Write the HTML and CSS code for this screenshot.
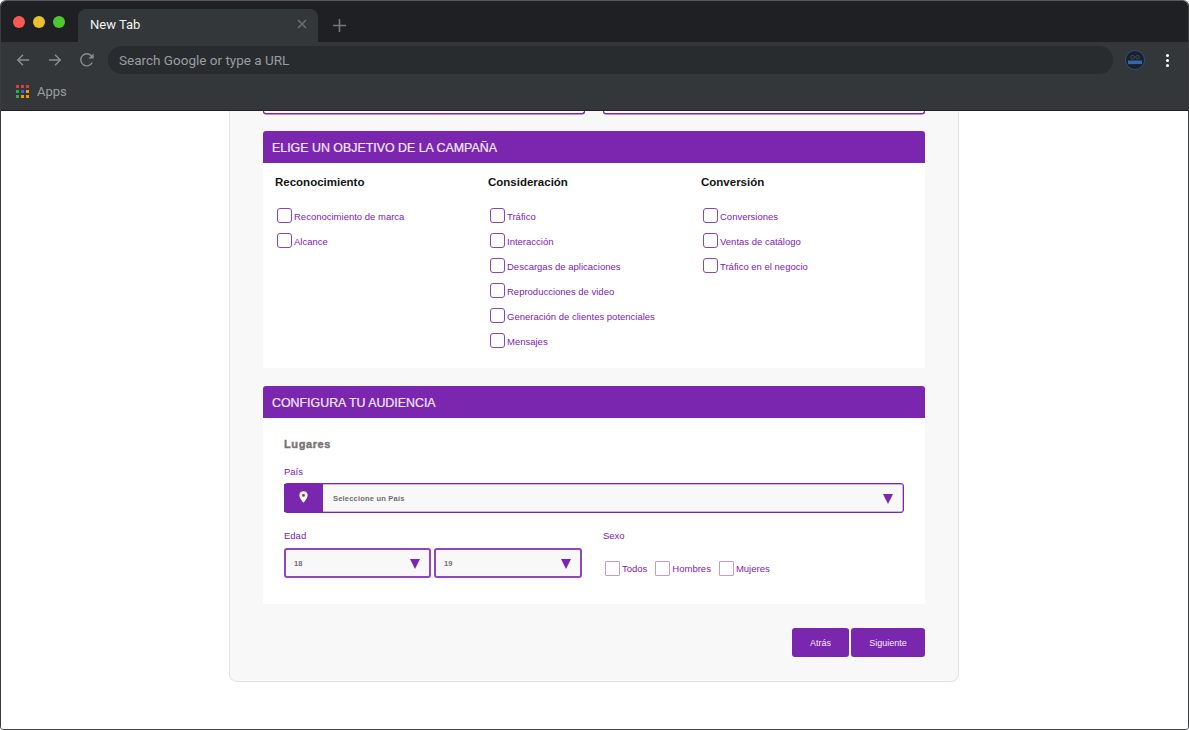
FILE: index.html
```html
<!DOCTYPE html>
<html lang="en">
<head>
    <meta charset="UTF-8">
    <meta name="viewport" content="width=device-width, initial-scale=1.0">
    <title>New Tab</title>
    <link rel="stylesheet" href="styles.css">
</head>
<body>
    <div class="window">
        <div class="tabstrip">
            <div class="lights">
                <span class="light red"></span>
                <span class="light yellow"></span>
                <span class="light green"></span>
            </div>
            <div class="tab">
                <span class="tab-title">New Tab</span>
                <svg class="tab-close" width="10" height="10" viewBox="0 0 10 10"><path d="M1 1l8 8M9 1l-8 8" stroke="#6e7175" stroke-width="1.4" fill="none"/></svg>
            </div>
            <svg class="new-tab" width="13" height="13" viewBox="0 0 13 13"><path d="M6.5 0v13M0 6.5h13" stroke="#75787c" stroke-width="1.6" fill="none"/></svg>
        </div>

        <div class="toolbar">
            <svg class="nav-icon" width="14" height="14" viewBox="0 0 16 16"><path d="M15 8H2M8 2L2 8l6 6" stroke="#8a8d91" stroke-width="1.6" fill="none"/></svg>
            <svg class="nav-icon" width="14" height="14" viewBox="0 0 16 16"><path d="M1 8h13M8 2l6 6-6 6" stroke="#8a8d91" stroke-width="1.6" fill="none"/></svg>
            <svg class="nav-icon" width="14" height="14" viewBox="1 1 14 14"><path d="M13.2 10.500A6 6 0 1 1 12.300 3.800L14 5.600" stroke="#8a8d91" stroke-width="1.4" fill="none"/><path d="M14.600 1.400v5.200H9.400z" fill="#8a8d91"/></svg>
            <div class="omnibox">Search Google or type a URL</div>
            <svg class="avatar" width="20" height="20" viewBox="0 0 20 20">
                <circle cx="10" cy="10" r="9.5" fill="#1b2029" stroke="#2c5a9e" stroke-width="0.8"/>
                <circle cx="7.5" cy="7.2" r="1.800" fill="none" stroke="#3c5f92" stroke-width="0.7"/>
                <circle cx="12.5" cy="7.2" r="1.800" fill="none" stroke="#3c5f92" stroke-width="0.7"/>
                <rect x="3" y="10.500" width="14" height="3.600" fill="#3566ad"/>
            </svg>
            <div class="menu-dots"><span></span><span></span><span></span></div>
        </div>

        <div class="bookmarks">
            <div class="apps-grid">
                <span class="c-red"></span><span class="c-red"></span><span class="c-red"></span>
                <span class="c-green"></span><span class="c-blue"></span><span class="c-orange"></span>
                <span class="c-green"></span><span class="c-orange"></span><span class="c-orange"></span>
            </div>
            <span class="apps-label">Apps</span>
        </div>

        <div class="page">
            <div class="panel">
                <div class="cut-inputs">
                    <div class="cut-input"></div>
                    <div class="cut-input"></div>
                </div>

                <section class="card card-goal">
                    <h2 class="card-title">ELIGE UN OBJETIVO DE LA CAMPAÑA</h2>
                    <div class="goal-columns">
                        <div class="goal-col">
                            <h3 class="goal-title">Reconocimiento</h3>
                            <label class="check"><span class="box"></span>Reconocimiento de marca</label>
                            <label class="check"><span class="box"></span>Alcance</label>
                        </div>
                        <div class="goal-col">
                            <h3 class="goal-title">Consideración</h3>
                            <label class="check"><span class="box"></span>Tráfico</label>
                            <label class="check"><span class="box"></span>Interacción</label>
                            <label class="check"><span class="box"></span>Descargas de aplicaciones</label>
                            <label class="check"><span class="box"></span>Reproducciones de video</label>
                            <label class="check"><span class="box"></span>Generación de clientes potenciales</label>
                            <label class="check"><span class="box"></span>Mensajes</label>
                        </div>
                        <div class="goal-col">
                            <h3 class="goal-title">Conversión</h3>
                            <label class="check"><span class="box"></span>Conversiones</label>
                            <label class="check"><span class="box"></span>Ventas de catálogo</label>
                            <label class="check"><span class="box"></span>Tráfico en el negocio</label>
                        </div>
                    </div>
                </section>

                <section class="card card-audience">
                    <h2 class="card-title">CONFIGURA TU AUDIENCIA</h2>
                    <div class="audience-body">
                        <h3 class="places-title">Lugares</h3>
                        <div class="field-label">País</div>
                        <div class="select select-country">
                            <span class="select-icon">
                                <svg width="9" height="12" viewBox="0 0 10 13"><path fill-rule="evenodd" d="M5 0a4.600 4.600 0 0 1 4.600 4.600C9.600 7.800 5 13 5 13S.4 7.800.4 4.600A4.600 4.600 0 0 1 5 0zm0 3.100a1.600 1.600 0 1 0 0 3.200 1.600 1.600 0 0 0 0-3.200z" fill="#fff"/></svg>
                            </span>
                            <span class="select-text">Seleccione un País</span>
                            <span class="arrow"></span>
                        </div>
                        <div class="audience-row">
                            <div class="age">
                                <div class="field-label">Edad</div>
                                <div class="age-selects">
                                    <div class="select select-age"><span class="select-text">18</span><span class="arrow"></span></div>
                                    <div class="select select-age"><span class="select-text">19</span><span class="arrow"></span></div>
                                </div>
                            </div>
                            <div class="sex">
                                <div class="field-label">Sexo</div>
                                <div class="sex-options">
                                    <label class="check-small"><span class="box box-light"></span>Todos</label>
                                    <label class="check-small"><span class="box box-light"></span>Hombres</label>
                                    <label class="check-small"><span class="box box-light"></span>Mujeres</label>
                                </div>
                            </div>
                        </div>
                    </div>
                </section>

                <div class="actions">
                    <button class="btn btn-back">Atrás</button>
                    <button class="btn btn-next">Siguiente</button>
                </div>
            </div>
        </div>
    </div>
</body>
</html>
```

FILE: styles.css
```css
* {
    box-sizing: border-box;
}

html, body {
    margin: 0;
    height: 100%;
    background: #fff;
    overflow: hidden;
}

body {
    font-family: "Liberation Sans", Arial, sans-serif;
}

.window {
    height: 730px;
    display: flex;
    flex-direction: column;
    border: 1px solid #3b3c3e;
    border-top-color: #5a5b5d;
    border-bottom-color: #4a4a4a;
    border-radius: 6px 6px 4px 4px;
    overflow: hidden;
}

/* browser chrome */
.tabstrip {
    height: 41px;
    flex: none;
    display: flex;
    align-items: flex-end;
    background: #1f2023;
}

.lights {
    display: flex;
    gap: 8px;
    padding: 0 0 14px 12px;
    width: 77px;
}

.light {
    width: 12px;
    height: 12px;
    border-radius: 50%;
}

.light.red { background: #fc5753; }
.light.yellow { background: #e9c02c; }
.light.green { background: #4ec62f; }

.tab {
    width: 240px;
    height: 33px;
    display: flex;
    align-items: center;
    justify-content: space-between;
    padding: 0 11px 3px 12px;
    background: #33373a;
    border-radius: 8px 8px 0 0;
}

.tab-title {
    color: #f1f3f4;
    font-family: Roboto, sans-serif;
    font-size: 13px;
}

.new-tab {
    margin: 0 0 10px 15px;
}

.toolbar {
    height: 36px;
    flex: none;
    display: flex;
    align-items: center;
    background: #33373a;
    padding: 0 0 0 15px;
}

.nav-icon {
    margin-right: 18px;
}

.nav-icon:nth-child(3) {
    margin-right: 14px;
}

.omnibox {
    width: 1005px;
    height: 28px;
    padding-left: 11px;
    border-radius: 14px;
    background: #292c2e;
    color: #9a9da1;
    font-family: Roboto, sans-serif;
    font-size: 13.500px;
    line-height: 29px;
}

.avatar {
    margin-left: 12px;
}

.menu-dots {
    margin-left: 21px;
    display: flex;
    flex-direction: column;
    gap: 2px;
}

.menu-dots span {
    width: 3px;
    height: 3px;
    border-radius: 50%;
    background: #fff;
}

.bookmarks {
    height: 33px;
    flex: none;
    display: flex;
    align-items: center;
    padding: 0 0 6px 15px;
    background: #33373a;
    border-bottom: 1px solid #202124;
}

.apps-grid {
    display: grid;
    grid-template-columns: repeat(3, 3px);
    grid-auto-rows: 3px;
    gap: 2px;
}

.c-red { background: #e53935; }
.c-green { background: #34a853; }
.c-blue { background: #1a73e8; }
.c-orange { background: #f29900; }

.apps-label {
    margin-left: 8px;
    color: #9a9da1;
    font-family: Roboto, sans-serif;
    font-size: 13px;
}

/* page */
.page {
    flex: 1;
    min-height: 0;
    background: #fff;
}

.panel {
    width: 730px;
    margin-left: 228px;
    height: 571px;
    padding: 0 33px;
    background: #f8f8f8;
    border: 1px solid #e4e4e4;
    border-top: none;
    border-radius: 0 0 8px 8px;
}

.cut-inputs {
    display: flex;
    justify-content: space-between;
}

.cut-input {
    width: 322px;
    height: 3px;
    background: #f8f8f8;
    border: 1px solid #7b26ae;
    border-top: none;
    box-shadow: 0 0.5px 0 #7b26ae;
    border-radius: 0 0 3px 3px;
}

.card {
    background: #fff;
    border-radius: 3px 3px 0 0;
}

.card-goal {
    margin-top: 17px;
    height: 237px;
}

.card-audience {
    margin-top: 18px;
    height: 218px;
}

.card-title {
    margin: 0;
    height: 32px;
    padding-left: 9px;
    background: #7b26ae;
    border-radius: 3px 3px 0 0;
    color: #f3eaf8;
    font-size: 12.400px;
    font-weight: 400;
    line-height: 34px;
    -webkit-text-stroke: 0.2px #f3eaf8;
}

.goal-columns {
    display: grid;
    grid-template-columns: repeat(3, 213px);
    padding-left: 12px;
}

.goal-title {
    margin: 0 0 3px;
    padding-top: 12px;
    height: 37px;
    color: #141414;
    font-size: 11.500px;
    font-weight: 700;
    line-height: 14px;
}

.check {
    display: flex;
    align-items: center;
    height: 25px;
    padding: 1px 0 0 2px;
    color: #7a22bb;
    font-size: 9.500px;
}

.check .box {
    margin-bottom: 1px;
}

.box {
    width: 15px;
    height: 15px;
    flex: none;
    margin-right: 2px;
    background: #fff;
    border: 1px solid #8a44bb;
    border-radius: 3px;
}

.audience-body {
    padding: 19px 21px 0;
}

.places-title {
    margin: 0;
    height: 14px;
    color: #757575;
    font-size: 11px;
    font-weight: 700;
    letter-spacing: 0.6px;
    line-height: 14px;
    -webkit-text-stroke: 0.4px #757575;
}

.field-label {
    color: #7a22bb;
    font-size: 9.500px;
    line-height: 12px;
}

.places-title + .field-label {
    margin-top: 15px;
}

.select {
    display: flex;
    align-items: center;
    height: 30px;
    background: #f8f8f8;
    border: 2px solid #8f47c0;
    border-radius: 3px;
}

.select-country {
    margin-top: 5px;
    border-width: 1px;
    border-color: #7b26ae;
    box-shadow: inset 0 0 0 0.5px #a56fd0;
}

.select-icon {
    width: 39px;
    height: 100%;
    flex: none;
    display: flex;
    justify-content: center;
    margin-left: -1px;
    padding-top: 7px;
    background: #7b26ae;
}

.select-text {
    flex: 1;
    padding-left: 8px;
    color: #6f6f6f;
    font-size: 7.500px;
    font-weight: 700;
    letter-spacing: 0.2px;
}

.select-country .select-text {
    padding-left: 10px;
}

.arrow {
    width: 0;
    height: 0;
    margin: 2px 9px 0 0;
    border-left: 5.500px solid transparent;
    border-right: 5.500px solid transparent;
    border-top: 10px solid #7b26ae;
}

.select-country .arrow {
    margin-right: 10px;
}

.audience-row {
    display: flex;
    margin-top: 17px;
}

.age {
    width: 319px;
}

.age-selects {
    display: flex;
    gap: 3px;
    margin-top: 6px;
}

.select-age {
    width: 147px;
}

.select-age + .select-age {
    width: 148px;
}

.sex-options {
    display: flex;
    gap: 8px;
    margin-top: 19px;
    padding-left: 2px;
}

.check-small {
    display: flex;
    align-items: center;
    color: #7a22bb;
    font-size: 9.500px;
}

.box-light {
    border-color: #c299dc;
    border-radius: 1px;
}

.actions {
    display: flex;
    justify-content: flex-end;
    gap: 2px;
    margin-top: 24px;
}

.btn {
    height: 29px;
    padding: 0;
    border: none;
    border-radius: 3px;
    background: #7b26ae;
    color: #f3eaf8;
    font-family: "Liberation Sans", Arial, sans-serif;
    font-size: 9px;
}

.btn-back { width: 57px; }
.btn-next { width: 74px; }
```
